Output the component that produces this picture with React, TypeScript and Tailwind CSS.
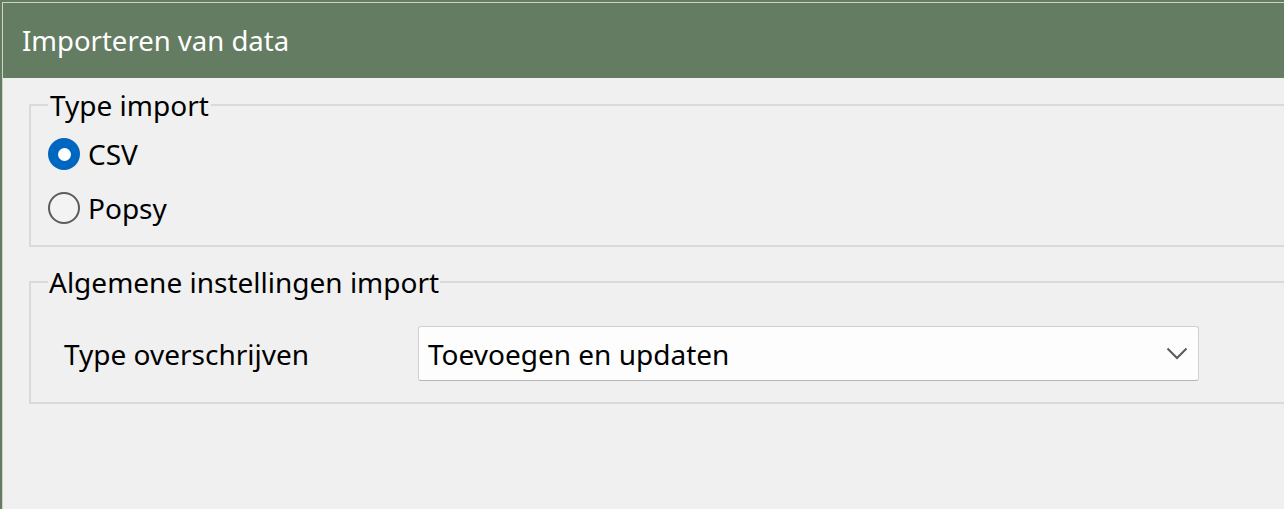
import { useState } from "react"

const font = { fontFamily: '"Noto Sans", "Open Sans", sans-serif' }

function Radio({ checked, label, onClick }: { checked: boolean; label: string; onClick: () => void }) {
  return (
    <div className="flex h-[54px] items-center gap-[8px] cursor-default" onClick={onClick}>
      {checked ? (
        <span className="flex h-[32px] w-[32px] items-center justify-center rounded-full bg-[#0067c0]">
          <span className="h-[13px] w-[13px] rounded-full bg-white" />
        </span>
      ) : (
        <span className="h-[32px] w-[32px] rounded-full border-2 border-[#5b5b5b] bg-[#f3f3f3]" />
      )}
      <span className="text-[28px] leading-[36px] text-black">{label}</span>
    </div>
  )
}

export default function App() {
  const [type, setType] = useState("csv")

  return (
    <div className="h-[509px] w-[1284px] overflow-hidden bg-[#647c62] pl-[2px] pt-[2px]" style={font}>
      <div className="flex h-full flex-col border-l border-t border-[#cfd3c6]">
        {/* Title bar */}
        <div className="flex h-[75px] items-center bg-[#647c62] pl-[19px]">
          <h1 className="text-[27.5px] text-white">Importeren van data</h1>
        </div>

        {/* Content */}
        <div className="flex-1 bg-[#f0f0f0] pl-[26px] pt-[11px]">
          <fieldset className="w-[1300px] border-2 border-[#dadada] pb-[10px] pl-[17px]">
            <legend className="px-[2px] text-[28px] leading-[32px] text-black">Type import</legend>
            <div className="mt-[6px]">
              <Radio checked={type === "csv"} label="CSV" onClick={() => setType("csv")} />
              <Radio checked={type === "popsy"} label="Popsy" onClick={() => setType("popsy")} />
            </div>
          </fieldset>

          <fieldset className="mt-[19px] w-[1300px] border-2 border-[#dadada] pb-[21px] pl-[17px]">
            <legend className="px-[1px] text-[28px] leading-[32px] text-black">Algemene instellingen import</legend>
            <div className="mt-[28px] flex items-center">
              <span className="w-[370px] pl-[16px] text-[28px] text-black">Type overschrijven</span>
              <div className="flex h-[55px] w-[781px] items-center justify-between rounded-[3px] border border-[#d0d0d0] border-b-[#b5b5b5] bg-[#fdfdfd] pl-[9px] pr-[10px]">
                <span className="text-[28px] text-black">Toevoegen en updaten</span>
                <svg width="22" height="13" viewBox="0 0 22 13" fill="none">
                  <path d="M1.5 1.5 L11 11 L20.5 1.5" stroke="#5a5a5a" strokeWidth="2" />
                </svg>
              </div>
            </div>
          </fieldset>
        </div>
      </div>
    </div>
  )
}
